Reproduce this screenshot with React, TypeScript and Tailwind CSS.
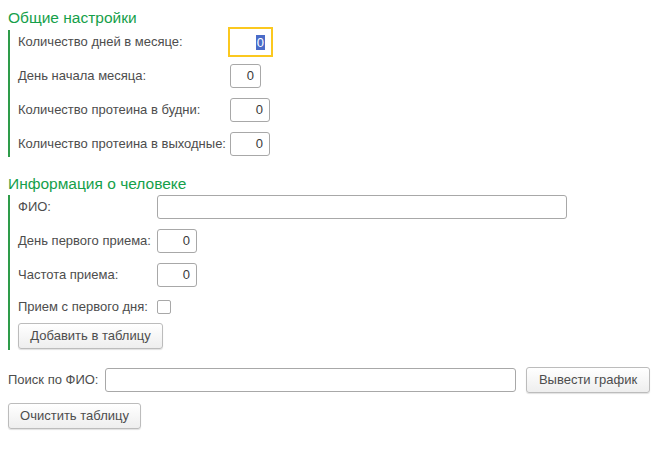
import React from "react";

const font = { fontFamily: '"Liberation Sans", Arial, sans-serif' };

function NumInput({ w = "w-[40px]", focused = false }: { w?: string; focused?: boolean }) {
  if (focused) {
    return (
      <div className="w-[45px] h-[30px] border-2 border-[#fbc81f] flex items-center justify-end pr-[6px] bg-white -ml-[2px] shrink-0">
        <span className="bg-[#4a6bc8] text-white leading-[15px] px-[1px]">0</span>
      </div>
    );
  }
  return (
    <div className={`${w} h-[24px] border border-[#a8a8a8] rounded-[3px] flex items-center justify-end pr-[6px] bg-white text-[#3a3a3a] shrink-0`}>
      0
    </div>
  );
}

function Row({ label, children, labelW, className = "" }: { label: string; children: React.ReactNode; labelW: string; className?: string }) {
  return (
    <div className={`flex items-center h-[24px] ${className}`}>
      <div className={`${labelW} shrink-0 text-[#4d4d4d]`}>{label}</div>
      {children}
    </div>
  );
}

function Btn({ children, w }: { children: React.ReactNode; w: string }) {
  return (
    <div className={`${w} h-[26px] border border-[#bcbcbc] rounded-[3px] bg-gradient-to-b from-white to-[#eeeeee] shadow-[0_1px_1px_rgba(0,0,0,0.12)] flex items-center justify-center text-[#4d4d4d]`}>
      {children}
    </div>
  );
}

export default function App() {
  return (
    <div className="w-[670px] h-[465px] bg-white text-[13px] relative" style={font}>
      <div className="pl-[8px] pt-[8px]">
        <div className="text-[15.5px] leading-[20px] text-[#15a04a]">Общие настройки</div>
        <div className="mt-[2px] border-l-2 border-[#2e9c4a] pl-[8px] flex flex-col pb-[1px]">
          <div className="flex items-center h-[24px]">
            <div className="w-[212px] shrink-0 text-[#4d4d4d]">Количество дней в месяце:</div>
            <NumInput focused />
          </div>
          <Row label="День начала месяца:" labelW="w-[212px]" className="mt-[10px]">
            <NumInput w="w-[31px]" />
          </Row>
          <Row label="Количество протеина в будни:" labelW="w-[212px]" className="mt-[10px]">
            <NumInput />
          </Row>
          <Row label="Количество протеина в выходные:" labelW="w-[212px]" className="mt-[10px]">
            <NumInput />
          </Row>
        </div>

        <div className="mt-[17px] text-[15.5px] leading-[20px] text-[#15a04a]">Информация о человеке</div>
        <div className="mt-[1px] border-l-2 border-[#2e9c4a] pl-[8px] flex flex-col pb-[1px]">
          <Row label="ФИО:" labelW="w-[139px]">
            <div className="w-[410px] h-[24px] border border-[#a8a8a8] rounded-[3px] bg-white" />
          </Row>
          <Row label="День первого приема:" labelW="w-[139px]" className="mt-[10px]">
            <NumInput />
          </Row>
          <Row label="Частота приема:" labelW="w-[139px]" className="mt-[10px]">
            <NumInput />
          </Row>
          <Row label="Прием с первого дня:" labelW="w-[139px]" className="mt-[8px]">
            <div className="w-[14px] h-[14px] border border-[#a8a8a8] rounded-[2px] bg-white" />
          </Row>
          <div className="mt-[4px]">
            <Btn w="w-[145px]">Добавить в таблицу</Btn>
          </div>
        </div>

        <div className="mt-[17px] flex items-center h-[26px]">
          <div className="w-[97px] shrink-0 text-[#4d4d4d]">Поиск по ФИО:</div>
          <div className="w-[411px] h-[24px] border border-[#a8a8a8] rounded-[3px] bg-white" />
          <div className="ml-[10px]">
            <Btn w="w-[124px]">Вывести график</Btn>
          </div>
        </div>
        <div className="mt-[10px]">
          <Btn w="w-[133px]">Очистить таблицу</Btn>
        </div>
      </div>
    </div>
  );
}
